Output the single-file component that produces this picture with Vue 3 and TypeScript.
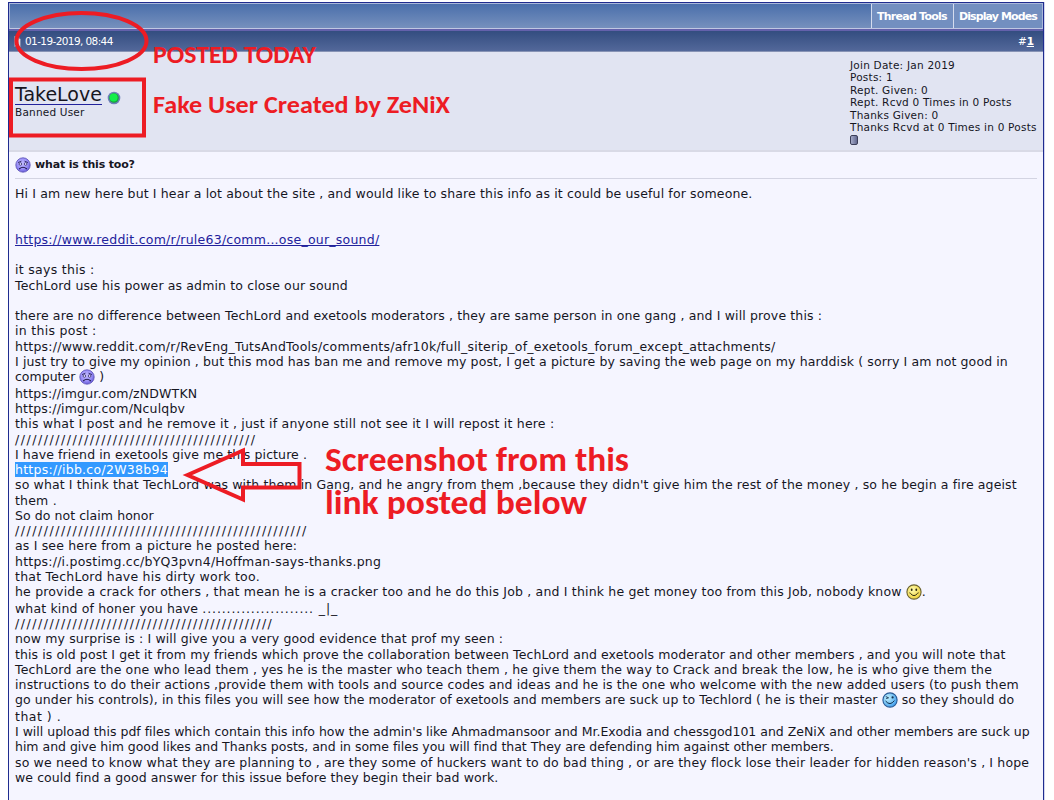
<template>
  <div class="page">
    <div class="thread">
      <div class="toolbar">
        <a class="tool">Thread Tools</a>
        <a class="tool">Display Modes</a>
      </div>
      <div class="post-head">
        <svg class="doc" width="7" height="11" viewBox="0 0 7 11">
          <path d="M0.5 0.5h3.5l2.5 3v7h-6z" fill="#d8deeb" stroke="#7f8bab" />
        </svg>
        <span class="date">01-19-2019, 08:44</span>
        <span class="number">#<a>1</a></span>
      </div>
      <div class="user">
        <div class="who">
          <div class="name-row">
            <a class="name">TakeLove</a>
            <svg class="status" width="14" height="14" viewBox="0 0 14 14">
              <circle cx="7" cy="7" r="6.3" fill="#6d7fb8" />
              <circle cx="7" cy="7" r="4.8" fill="#17a33c" />
              <circle cx="6.6" cy="6.6" r="4" fill="#12ee4a" />
            </svg>
          </div>
          <div class="rank">Banned User</div>
        </div>
        <div class="stats">
          <div v-for="s in stats" :key="s">{{ s }}</div>
          <i class="rep"></i>
        </div>
      </div>
      <div class="post">
        <div class="title">
          <svg class="face" viewBox="0 0 16 16"><use href="#face-sad" /></svg>
          <strong>what is this too?</strong>
        </div>
        <div class="body">
          <div
            v-for="(line, i) in lines"
            :key="i"
            class="line"
            :class="{ tall: line.face }"
            :style="{ letterSpacing: (line.ls || 0) + 'px' }"
          ><span :class="line.kind">{{ line.text }}</span><svg v-if="line.face" class="face" viewBox="0 0 16 16"><use :href="'#face-' + line.face" /></svg><span v-if="line.after" :class="{ dots: !line.face }">{{ line.after }}</span></div>
        </div>
      </div>
    </div>

    <!-- red marks drawn over the post -->
    <svg class="marks" width="1054" height="800" viewBox="0 0 1054 800">
      <defs>
        <radialGradient id="g-sad" cx="45%" cy="40%" r="62%">
          <stop offset="0" stop-color="#c3bdff" />
          <stop offset="0.6" stop-color="#9a8ff8" />
          <stop offset="1" stop-color="#6459d6" />
        </radialGradient>
        <radialGradient id="g-smile" cx="40%" cy="35%" r="65%">
          <stop offset="0" stop-color="#fffbb0" />
          <stop offset="1" stop-color="#eed23c" />
        </radialGradient>
        <radialGradient id="g-wink" cx="35%" cy="35%" r="70%">
          <stop offset="0" stop-color="#c4f4ff" />
          <stop offset="1" stop-color="#3f9dec" />
        </radialGradient>
        <symbol id="face-sad" viewBox="0 0 16 16">
          <circle cx="8" cy="8" r="7.2" fill="url(#g-sad)" stroke="#5b51b5" stroke-width="0.8" />
          <path d="M3 5.6L6.4 4.2M13 5.6L9.6 4.2" stroke="#2a235e" stroke-width="0.9" />
          <circle cx="5.4" cy="7" r="1.3" fill="#e8e6ff" stroke="#2a235e" stroke-width="0.7" />
          <circle cx="10.6" cy="7" r="1.3" fill="#e8e6ff" stroke="#2a235e" stroke-width="0.7" />
          <path d="M4.6 12.2V11.6Q8 8.800 11.4 11.600V12.2" fill="none" stroke="#1d1747" stroke-width="1.1" />
        </symbol>
        <symbol id="face-smile" viewBox="0 0 16 16">
          <circle cx="8" cy="8" r="7.1" fill="url(#g-smile)" stroke="#6b6330" stroke-width="1.1" />
          <ellipse cx="5.7" cy="5.8" rx="0.9" ry="1.2" fill="#2d2910" />
          <ellipse cx="10.3" cy="5.8" rx="0.9" ry="1.2" fill="#2d2910" />
          <path d="M3.400 8.800L4.400 9.300Q8 13.900 11.600 9.300L12.600 8.800" fill="none" stroke="#2d2910" stroke-width="1" />
        </symbol>
        <symbol id="face-wink" viewBox="0 0 16 16">
          <circle cx="8" cy="8" r="7.1" fill="url(#g-wink)" stroke="#285a96" stroke-width="1.1" />
          <path d="M3.800 4.600L6.600 5.800L4.200 6.600" fill="none" stroke="#12304f" stroke-width="0.9" />
          <circle cx="10.600" cy="5.400" r="1.100" fill="#12304f" />
          <path d="M3.600 9Q8 14.400 12.400 8.600" fill="none" stroke="#12304f" stroke-width="1" />
        </symbol>
      </defs>
      <ellipse cx="81.500" cy="41" rx="65" ry="28" />
      <rect x="11" y="79.500" width="133" height="56" />
      <path d="M187.500 475L243 450.500V464H299.500V487.500H243V499.500Z" />
      <text v-for="n in notes" :key="n.text" :x="n.x" :y="n.y" :font-size="n.size" :textLength="n.w" lengthAdjust="spacingAndGlyphs">{{ n.text }}</text>
    </svg>
  </div>
</template>

<script setup lang="ts">
interface Line {
  text: string
  kind?: string
  face?: string
  after?: string
  ls?: number
}

const stats = [
  'Join Date: Jan 2019',
  'Posts: 1',
  'Rept. Given: 0',
  'Rept. Rcvd 0 Times in 0 Posts',
  'Thanks Given: 0',
  'Thanks Rcvd at 0 Times in 0 Posts'
]

const notes = [
  { text: 'POSTED TODAY', x: 153, y: 63, w: 163, size: 24.5 },
  { text: 'Fake User Created by ZeNiX', x: 153, y: 113, w: 297, size: 25 },
  { text: 'Screenshot from this', x: 325, y: 471, w: 304, size: 34 },
  { text: 'link posted below', x: 325, y: 514, w: 262, size: 34 }
]

const lines: Line[] = [
  { text: 'Hi I am new here but I hear a lot about the site , and would like to share this info as it could be useful for someone.', ls: 0.135 },
  { text: '' },
  { text: '' },
  { text: 'https://www.reddit.com/r/rule63/comm...ose_our_sound/', kind: 'link', ls: 0.24 },
  { text: '' },
  { text: 'it says this :', ls: 0.3 },
  { text: 'TechLord use his power as admin to close our sound', ls: 0.13 },
  { text: '' },
  { text: 'there are no difference between TechLord and exetools moderators , they are same person in one gang , and I will prove this :', ls: 0.135 },
  { text: 'in this post :', ls: 0.3 },
  { text: 'https://www.reddit.com/r/RevEng_TutsAndTools/comments/afr10k/full_siterip_of_exetools_forum_except_attachments/', ls: 0.232 },
  { text: 'I just try to give my opinion , but this mod has ban me and remove my post, I get a picture by saving the web page on my harddisk ( sorry I am not good in', ls: 0.116 },
  { text: 'computer ', face: 'sad', after: ' )' },
  { text: 'https://imgur.com/zNDWTKN', ls: 0.16 },
  { text: 'https://imgur.com/Nculqbv', ls: 0.16 },
  { text: 'this what I post and he remove it , just if anyone still not see it I will repost it here :', ls: 0.205 },
  { text: '//////////////////////////////////////////', ls: 1.54 },
  { text: 'I have friend in exetools give me this picture .', ls: 0.1 },
  { text: 'https://ibb.co/2W38b94', kind: 'selected', ls: 0.27 },
  { text: "so what I think that TechLord was with them in Gang, and he angry from them ,because they didn't give him the rest of the money , so he begin a fire ageist", ls: 0.13 },
  { text: 'them .', ls: 0.2 },
  { text: 'So do not claim honor', ls: 0.06 },
  { text: '///////////////////////////////////////////////////', ls: 1.53 },
  { text: 'as I see here from a picture he posted here:', ls: 0.17 },
  { text: 'https://i.postimg.cc/bYQ3pvn4/Hoffman-says-thanks.png', ls: 0.226 },
  { text: 'that TechLord have his dirty work too.', ls: 0.23 },
  { text: 'he provide a crack for others , that mean he is a cracker too and he do this Job , and I think he get money too from this Job, nobody know ', face: 'smile', after: '.', ls: 0.18 },
  { text: 'what kind of honer you have ', after: '....................... _|_', ls: 0.15 },
  { text: '/////////////////////////////////////////////', ls: 1.53 },
  { text: 'now my surprise is : I will give you a very good evidence that prof my seen :', ls: 0.13 },
  { text: 'this is old post I get it from my friends which prove the collaboration between TechLord and exetools moderator and other members , and you will note that', ls: 0.092 },
  { text: 'TechLord are the one who lead them , yes he is the master who teach them , he give them the way to Crack and break the low, he is who give them the', ls: 0.16 },
  { text: 'instructions to do their actions ,provide them with tools and source codes and ideas and he is the one who welcome with the new added users (to push them', ls: 0.115 },
  { text: 'go under his controls), in this files you will see how the moderator of exetools and members are suck up to Techlord ( he is their master ', face: 'wink', after: ' so they should do', ls: 0.094 },
  { text: 'that ) .', ls: 0.5 },
  { text: "I will upload this pdf files which contain this info how the admin's like Ahmadmansoor and Mr.Exodia and chessgod101 and ZeNiX and other members are suck up", ls: -0.008 },
  { text: 'him and give him good likes and Thanks posts, and in some files you will find that They are defending him against other members.', ls: -0.015 },
  { text: "so we need to know what they are planning to , are they some of huckers want to do bad thing , or are they flock lose their leader for hidden reason's , I hope", ls: 0.146 },
  { text: 'we could find a good answer for this issue before they begin their bad work.', ls: 0.08 }
]
</script>

<style>
body {
  margin: 0;
  background: #fff;
}
</style>

<style scoped>
.page {
  position: relative;
  width: 1054px;
  height: 800px;
  overflow: hidden;
  background: #fff;
  color: #16161f;
  font-family: Verdana, "DejaVu Sans", sans-serif;
}
.thread {
  box-sizing: border-box;
  width: 1036px;
  height: 810px;
  margin: 2px 0 0 8px;
  border: 1px solid #1f2c8f;
  background: #f5f5ff;
  box-shadow: 1px 0 0 #d3d5ee;
}
.toolbar {
  display: flex;
  justify-content: flex-end;
  box-sizing: border-box;
  height: 26px;
  border: 1px solid #a9b7da;
  border-bottom-color: #c0c7e2;
  background: linear-gradient(#4a6fab, #7690bd);
}
.tool {
  box-sizing: border-box;
  width: 82px;
  padding-left: 5px;
  border-left: 1px solid #d5dcee;
  background: #738fc0;
  color: #fff;
  font: bold 11px/25px Verdana, "DejaVu Sans", sans-serif;
  letter-spacing: -0.75px;
  white-space: nowrap;
}
.tool + .tool {
  width: 89px;
  letter-spacing: -0.9px;
}
.post-head {
  display: flex;
  align-items: center;
  box-sizing: border-box;
  height: 23px;
  padding: 0 9px 0 5px;
  border-top: 2px solid #6361ab;
  border-bottom: 1px solid #8793b5;
  background: linear-gradient(#334d80, #53689a);
  color: #fff;
  font-size: 10.5px;
}
.date {
  margin-left: 4px;
  letter-spacing: -0.6px;
}
.number {
  margin-left: auto;
  font-size: 10.5px;
}
.number a {
  font-weight: bold;
  text-decoration: underline;
}
.user {
  display: flex;
  justify-content: space-between;
  box-sizing: border-box;
  height: 100px;
  padding: 7px 6px 0;
  border-bottom: 2px solid #d9dae6;
  background: #e1e4f2;
}
.who {
  padding-top: 24px;
}
.name-row {
  display: flex;
  align-items: flex-end;
  height: 22px;
}
.name {
  border-bottom: 1px solid #22229c;
  font-size: 19px;
  line-height: 20px;
}
.status {
  margin: 0 0 0 5px;
}
.rank {
  margin-top: 1px;
  font-size: 10.5px;
  line-height: 12px;
  letter-spacing: 0.2px;
}
.stats {
  width: 187px;
  font-size: 10.5px;
  line-height: 12.4px;
  letter-spacing: 0.23px;
  white-space: nowrap;
}
.rep {
  display: block;
  box-sizing: border-box;
  width: 8px;
  height: 10px;
  margin-top: 2px;
  border: 1px solid #3b3e58;
  border-radius: 2px;
  background: linear-gradient(90deg, #a5abc9, #62688f);
}
.post {
  padding: 0 6px;
}
.title {
  display: flex;
  align-items: center;
  box-sizing: border-box;
  height: 27px;
  padding-bottom: 1px;
  border-bottom: 1px solid #d3d4e2;
  font-size: 11px;
}
.title strong {
  margin-left: 4px;
  letter-spacing: -0.17px;
}
.face {
  width: 16px;
  height: 16px;
}
.body {
  padding-top: 7.1px;
  font-size: 12.5px;
}
.line {
  height: 15.27px;
  line-height: 15.27px;
  white-space: pre;
}
.line.tall {
  height: 16.5px;
}
.line .face {
  vertical-align: -4px;
}
.dots {
  letter-spacing: 0.88px;
}
.link {
  color: #22229c;
  text-decoration: underline;
}
.selected {
  display: inline-block;
  height: 15px;
  background: #3399ff;
  color: #fff;
}
.marks {
  position: absolute;
  left: 0;
  top: 0;
  fill: none;
  stroke: #ed1c24;
  stroke-width: 4;
}
.marks symbol {
  stroke: none;
}
.marks text {
  fill: #ed1c24;
  stroke: none;
  font-family: Calibri, Carlito, Lato, sans-serif;
  font-weight: 700;
}
</style>
